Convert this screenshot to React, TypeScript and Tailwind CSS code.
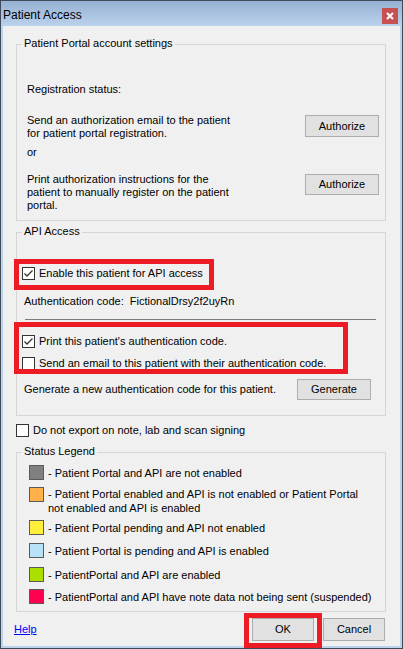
import React from "react";

const font = { fontFamily: '"Liberation Sans", Arial, sans-serif' };

function CheckBox({ checked }: { checked?: boolean }) {
  return (
    <svg width="13" height="13" viewBox="0 0 13 13" className="shrink-0 block">
      <rect x="0.5" y="0.5" width="12" height="12" fill="#ffffff" stroke="#333333" />
      {checked && (
        <path d="M2.5 6.5 L5 9 L10.5 3.5" fill="none" stroke="#333333" strokeWidth="1.3" />
      )}
    </svg>
  );
}

function Btn({ label, className }: { label: string; className: string }) {
  return (
    <div
      className={`flex items-center justify-center bg-[#e1e1e1] border border-[#adadad] text-[11px] text-black shrink-0 ${className}`}
    >
      {label}
    </div>
  );
}

function Legend({ label }: { label: string }) {
  return (
    <span className="absolute left-[5px] top-[-8px] px-[2px] bg-[#f0f0f0] text-[11px] leading-[13px] text-black whitespace-nowrap">
      {label}
    </span>
  );
}

function Swatch({ color }: { color: string }) {
  return <div className={`w-[15px] h-[15px] shrink-0 border border-[#5a5a5a] ${color}`} />;
}

export default function App() {
  return (
    <div
      style={font}
      className="relative w-[403px] h-[649px] border border-[#404b58] bg-[#bcd3ec] flex flex-col overflow-hidden"
    >
      {/* Title bar */}
      <div className="h-[25px] shrink-0 flex items-center justify-between bg-gradient-to-b from-[#97b1d3] to-[#bad2eb] pl-[2px] pr-[4px]">
        <span className="text-[12px] text-black pt-[3px] leading-[14px]">Patient Access</span>
        <div className="w-[16px] h-[16px] mt-[5px] bg-[#c75050] flex items-center justify-center">
          <svg width="8" height="8" viewBox="0 0 8 8">
            <path d="M1 1 L7 7 M7 1 L1 7" stroke="#ffffff" strokeWidth="2" />
          </svg>
        </div>
      </div>

      {/* Content */}
      <div className="mx-[2px] h-[620px] shrink-0 bg-[#f0f0f0] flex flex-col text-[11px] leading-[13px] text-black">
        {/* Group 1 */}
        <div className="relative ml-[13px] mt-[18px] w-[370px] h-[177px] border border-[#d5d5d5] pl-[10px] flex flex-col">
          <Legend label="Patient Portal account settings" />
          <div className="mt-[38px]">Registration status:</div>
          <div className="mt-[18px] flex justify-between items-start">
            <div>
              Send an authorization email to the patient
              <br />
              for patient portal registration.
            </div>
            <Btn label="Authorize" className="w-[74px] h-[22px] mt-[1px] mr-[6px]" />
          </div>
          <div className="mt-[6px]">or</div>
          <div className="mt-[14px] flex justify-between items-start">
            <div>
              Print authorization instructions for the
              <br />
              patient to manually register on the patient
              <br />
              portal.
            </div>
            <Btn label="Authorize" className="w-[74px] h-[21px] mt-[1px] mr-[6px]" />
          </div>
        </div>

        {/* Group 2 */}
        <div className="relative ml-[13px] mt-[11px] w-[370px] h-[184px] border border-[#d5d5d5] pl-[5px] flex flex-col">
          <Legend label="API Access" />
          <div className="mt-[34px] flex items-center gap-[4px] h-[13px]">
            <CheckBox checked />
            <span>Enable this patient for API access</span>
          </div>
          <div className="mt-[15px] ml-[2px] whitespace-pre">Authentication code:  FictionalDrsy2f2uyRn</div>
          <div className="mt-[11px] ml-[3px] w-[351px] h-[1px] bg-[#7a7a7a]" />
          <div className="mt-[15px] flex items-center gap-[4px] h-[13px]">
            <CheckBox checked />
            <span>Print this patient's authentication code.</span>
          </div>
          <div className="mt-[9px] flex items-center gap-[4px] h-[13px]">
            <CheckBox />
            <span>Send an email to this patient with their authentication code.</span>
          </div>
          <div className="mt-[9px] ml-[2px] flex items-center">
            <div className="w-[273px]">Generate a new authentication code for this patient.</div>
            <Btn label="Generate" className="w-[74px] h-[21px]" />
          </div>
        </div>

        {/* Do not export */}
        <div className="mt-[8px] ml-[13px] flex items-center gap-[4px] h-[13px]">
          <CheckBox />
          <span>Do not export on note, lab and scan signing</span>
        </div>

        {/* Group 3 */}
        <div className="relative ml-[13px] mt-[15px] w-[370px] h-[160px] border border-[#d5d5d5] pl-[12px] flex flex-col leading-[14px]">
          <Legend label="Status Legend" />
          <div className="mt-[12px] flex items-start gap-[4px]">
            <Swatch color="bg-[#808080]" />
            <span className="mt-[1px]">- Patient Portal and API are not enabled</span>
          </div>
          <div className="mt-[7px] flex items-start gap-[4px]">
            <Swatch color="bg-[#ffb24a]" />
            <span className="mt-[0px]">
              - Patient Portal enabled and API is not enabled or Patient Portal
              <br />
              not enabled and API is enabled
            </span>
          </div>
          <div className="mt-[5px] flex items-start gap-[4px]">
            <Swatch color="bg-[#ffee3c]" />
            <span className="mt-[1px]">- Patient Portal pending and API not enabled</span>
          </div>
          <div className="mt-[8px] flex items-start gap-[4px]">
            <Swatch color="bg-[#b8e2fa]" />
            <span className="mt-[1px]">- Patient Portal is pending and API is enabled</span>
          </div>
          <div className="mt-[9px] flex items-start gap-[4px]">
            <Swatch color="bg-[#acdf00]" />
            <span className="mt-[1px]">- PatientPortal and API are enabled</span>
          </div>
          <div className="mt-[7px] flex items-start gap-[4px]">
            <Swatch color="bg-[#ff0050]" />
            <span className="mt-[1px]">- PatientPortal and API have note data not being sent (suspended)</span>
          </div>
        </div>

        {/* Bottom row */}
        <div className="mt-[6px] flex items-center">
          <span className="ml-[11px] text-[#0000ff] underline">Help</span>
          <div className="ml-auto mr-[15px] flex gap-[9px]">
            <Btn label="OK" className="w-[62px] h-[23px]" />
            <Btn label="Cancel" className="w-[62px] h-[23px]" />
          </div>
        </div>
      </div>

      {/* Red annotation boxes */}
      <div className="absolute left-[13px] top-[258px] w-[200px] h-[31px] border-[5px] border-[#ed1c24] pointer-events-none" />
      <div className="absolute left-[13px] top-[321px] w-[334px] h-[52px] border-[5px] border-[#ed1c24] pointer-events-none" />
      <div className="absolute left-[243px] top-[612px] w-[78px] h-[35px] border-[5px] border-[#ed1c24] pointer-events-none" />
    </div>
  );
}
